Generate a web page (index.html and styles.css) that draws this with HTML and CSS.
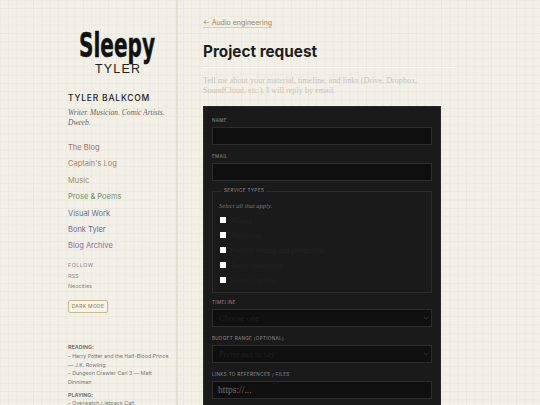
FILE: index.html
```html
<!DOCTYPE html>
<html lang="en">
<head>
<meta charset="utf-8">
<title>Project request</title>
<link rel="stylesheet" href="styles.css">
</head>
<body>
<div class="layout">
  <aside class="sidebar">
    <div class="logo">
      <svg class="logo-svg" viewBox="0 0 110 60" width="110" height="60" role="img" aria-label="Sleepy Tyler">
        <text class="logo-big" x="10" y="41" textLength="76" lengthAdjust="spacingAndGlyphs">Sleepy</text>
        <text class="logo-small" x="26" y="57" textLength="45" lengthAdjust="spacing">TYLER</text>
      </svg>
    </div>
    <h2 class="name">TYLER BALKCOM</h2>
    <p class="tagline">Writer. Musician. Comic Artists. Dweeb.</p>
    <nav class="nav">
      <a class="nav-link c1">The Blog</a>
      <a class="nav-link c2">Captain's Log</a>
      <a class="nav-link c3">Music</a>
      <a class="nav-link c4">Prose &amp; Poems</a>
      <a class="nav-link c5">Visual Work</a>
      <a class="nav-link c6">Bonk Tyler</a>
      <a class="nav-link c7">Blog Archive</a>
    </nav>
    <div class="follow">
      <div class="follow-title">FOLLOW</div>
      <a class="follow-link">RSS</a>
      <a class="follow-link">Neocities</a>
    </div>
    <button class="mode">DARK MODE</button>
    <div class="status">
      <p class="status-block"><b>READING:</b><br>– Harry Potter and the Half-Blood Prince — J.K. Rowling<br>– Dungeon Crawler Carl 3 — Matt Dinniman</p>
      <p class="status-block"><b>PLAYING:</b><br>– Overwatch (Jetpack Cat)</p>
    </div>
  </aside>
  <main class="main">
    <a class="back">← Audio engineering</a>
    <h1 class="title">Project request</h1>
    <p class="intro">Tell me about your material, timeline, and links (Drive, Dropbox, SoundCloud, etc.). I will reply by email.</p>
    <form class="card">
      <label class="label">NAME</label>
      <input class="field" type="text">
      <label class="label">EMAIL</label>
      <input class="field" type="text">
      <fieldset class="services">
        <legend class="legend">SERVICE TYPES</legend>
        <p class="hint">Select all that apply.</p>
        <div class="check"><span class="box"></span><span class="check-text">Mixing</span></div>
        <div class="check"><span class="box"></span><span class="check-text">Mastering</span></div>
        <div class="check"><span class="box"></span><span class="check-text">Podcast editing and production</span></div>
        <div class="check"><span class="box"></span><span class="check-text">Audio restoration</span></div>
        <div class="check"><span class="box"></span><span class="check-text">Something else</span></div>
      </fieldset>
      <label class="label">TIMELINE</label>
      <div class="field select"><span>Choose one</span><svg class="caret" viewBox="0 0 8 5" width="6" height="4"><path d="M1 1l3 3 3-3" fill="none" stroke="#333" stroke-width="1.3"/></svg></div>
      <label class="label">BUDGET RANGE (OPTIONAL)</label>
      <div class="field select"><span>Prefer not to say</span><svg class="caret" viewBox="0 0 8 5" width="6" height="4"><path d="M1 1l3 3 3-3" fill="none" stroke="#333" stroke-width="1.3"/></svg></div>
      <label class="label">LINKS TO REFERENCES / FILES</label>
      <div class="field url">https://...</div>
    </form>
  </main>
</div>
</body>
</html>
```
FILE: styles.css
```css
* { box-sizing: border-box; }
html, body { margin: 0; height: 405px; overflow: hidden; }
body {
  background-color: #f3f0e8;
  background-image:
    linear-gradient(#ebe8de 1px, transparent 1px),
    linear-gradient(90deg, #ebe8de 1px, transparent 1px);
  background-size: 8.33px 8.33px;
  background-position: 8px 8px;
  color: #1a1a1a;
  font-family: Inter, "Liberation Sans", sans-serif;
}
.layout { display: flex; align-items: flex-start; height: 405px; overflow: hidden; }
.sidebar {
  width: 178px;
  height: 405px;
  flex: none;
  padding: 16px 0 0 68px;
  border-right: 2px solid #e8dfd0;
  overflow: hidden;
}
.logo { height: 60px; margin-left: 1px; }
.logo-svg { display: block; overflow: visible; }
.logo-big { font-family: "DejaVu Sans", sans-serif; font-weight: 700; font-size: 34px; fill: #111; stroke: #111; stroke-width: .5px; }
.logo-small { font-family: "Liberation Sans", sans-serif; font-size: 12.5px; fill: #222; }
.name { margin: 16px 0 0; font-size: 8.5px; font-weight: 500; letter-spacing: .8px; line-height: 12px; color: #222; }
.tagline { margin: 4px 0 0; font-family: "Liberation Serif", serif; font-style: italic; font-size: 7.5px; line-height: 10px; color: #666; width: 100px; }
.nav { display: flex; flex-direction: column; gap: 6px; margin-top: 15px; }
.nav-link { font-size: 7.5px; line-height: 10.4px; }
.c1 { color: #a8685f; }
.c2 { color: #b07c5e; }
.c3 { color: #a39350; }
.c4 { color: #6b9269; }
.c5 { color: #5e7192; }
.c6 { color: #6c6495; }
.c7 { color: #8a6a99; }
.follow { margin-top: 10px; display: flex; flex-direction: column; gap: 4.7px; font-size: 5.4px; line-height: 6px; color: #888; }
.follow-title { letter-spacing: .5px; }
.mode {
  display: block;
  margin: 11px 0 0;
  width: 40px; height: 13px; padding: 0;
  background: #f6f3ea;
  border: 1px solid #c9b98f;
  border-radius: 2px;
  color: #a0905f;
  font: 500 5px/1 Inter, "Liberation Sans", sans-serif;
  letter-spacing: .3px;
}
.status { margin-top: 30px; width: 106px; font-size: 5.3px; line-height: 8.7px; color: #777; }
.status-block { margin: 0 0 4px; }
.main { flex: 1; padding: 18px 0 0 25px; min-width: 0; }
.back { display: block; width: fit-content; font-size: 7px; line-height: 9px; color: #a08a4f; border-bottom: 1px solid #dccfa8; }
.title { margin: 12px 0 0; width: 252px; padding-bottom: 4px; border-bottom: 1px solid #fbfaf6; font-size: 15.3px; line-height: 23px; font-weight: 700; color: #1e1e1e; }
.intro { margin: 8px 0 0; width: 240px; font-family: "Liberation Serif", serif; font-size: 8.2px; line-height: 10px; color: #c8c5bd; }
.card { margin-top: 10px; width: 238px; padding: 11px 8px 20px; background: #1a1a1a; border: 1px solid #2a2a2a; }
.label { display: block; font-size: 4.6px; letter-spacing: .35px; line-height: 6px; color: #8d8d8d; margin-bottom: 3px; }
.field { display: block; width: 100%; height: 18px; margin: 0 0 8.5px; padding: 0 5px; background: #0f0f0f; border: 1px solid #2c2c2c; border-radius: 0; outline: none; }
.services { margin: 0 0 7.5px; padding: 3px 6px 4px; border: 1px solid #2c2c2c; }
.legend { margin-left: 2px; padding: 0 3px; font-size: 4.6px; letter-spacing: .4px; line-height: 4px; color: #8d8d8d; }
.hint { margin: 4.5px 0 3px; font-family: "Liberation Serif", serif; font-style: italic; font-size: 6.5px; line-height: 9px; color: #777; }
.check { display: flex; align-items: center; gap: 5px; height: 15px; }
.box { width: 5.5px; height: 5.5px; background: #fff; flex: none; margin-left: 1px; }
.check-text { font-family: "Liberation Serif", serif; font-size: 7.5px; color: #222; }
.select { display: flex; align-items: center; justify-content: space-between; margin-bottom: 9px; font-family: "Liberation Serif", serif; font-size: 8.5px; color: #222; padding-left: 6px; padding-right: 2px; }
.url { font-family: "Liberation Serif", serif; font-size: 9.5px; line-height: 17px; color: #707070; }
```
